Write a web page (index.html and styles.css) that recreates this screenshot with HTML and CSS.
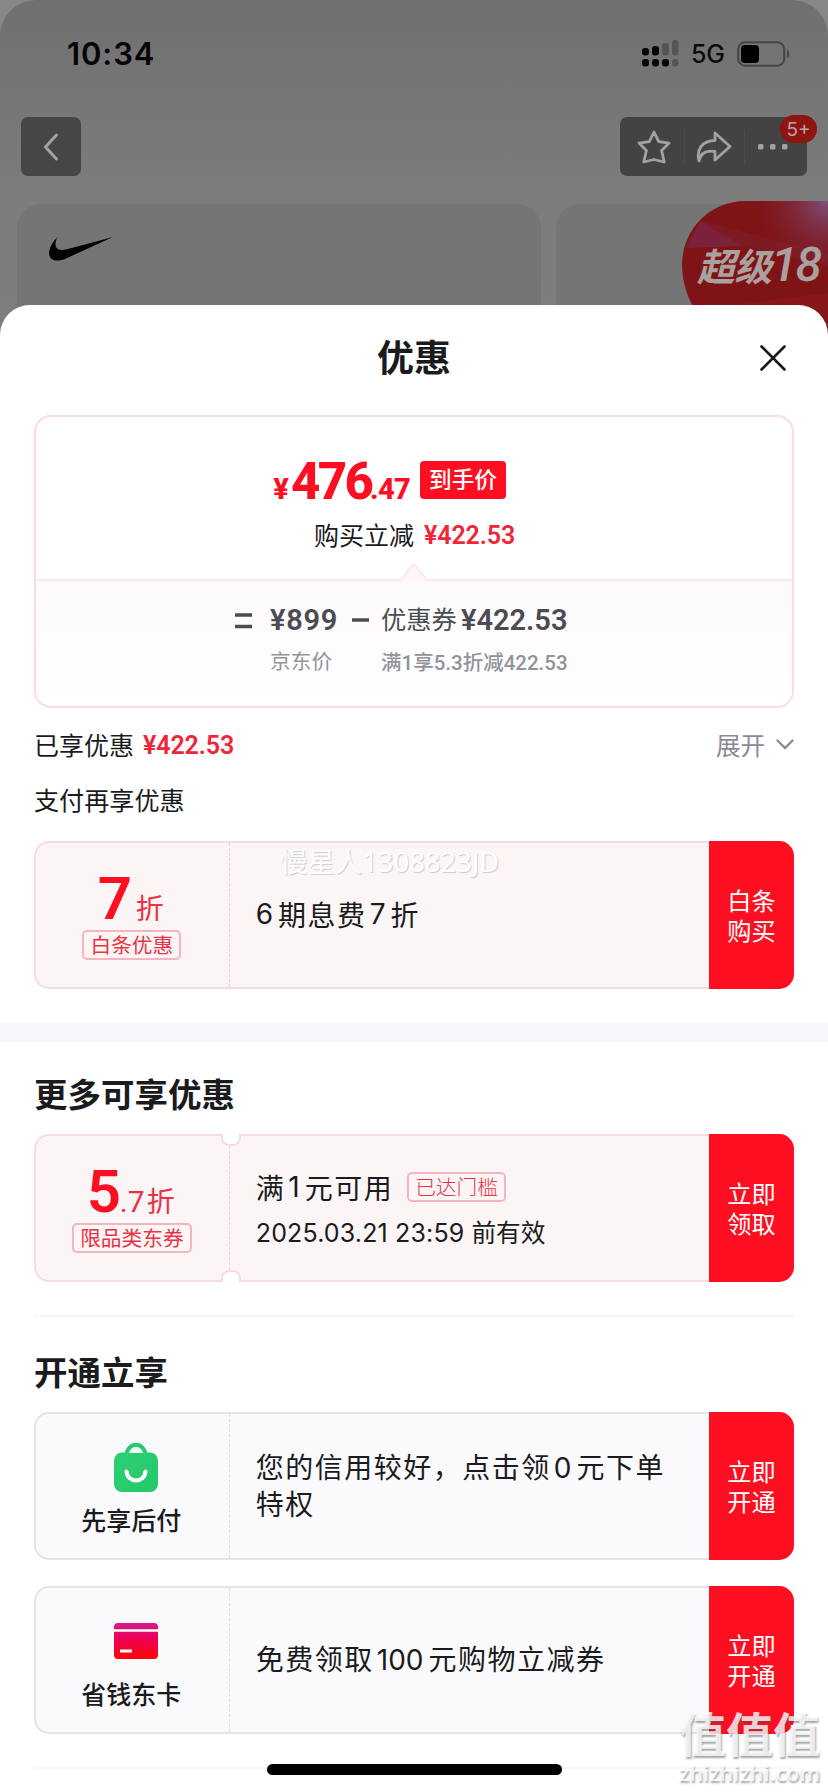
FILE: index.html
```html
<!DOCTYPE html>
<html lang="zh-CN">
<head>
<meta charset="utf-8">
<title>优惠</title>
<link rel="stylesheet" href="styles.css">
</head>
<body>
<div class="screen">
  <div class="backdrop">
    <div class="status">
      <span class="time">10:34</span>
      <div class="status-right">
        <svg class="signal" width="37" height="27" viewBox="0 0 37 27">
          <g fill="#060606"><rect x="0" y="8" width="7" height="7.500" rx="3"/><rect x="10" y="6" width="7" height="9.500" rx="3"/><rect x="0" y="19" width="7" height="7.500" rx="3"/><rect x="10" y="19" width="7" height="7.500" rx="3"/><rect x="20" y="19" width="7" height="7.500" rx="3"/></g>
          <g fill="#555"><rect x="20" y="3" width="7" height="12.500" rx="3"/><rect x="30" y="0" width="6.500" height="15.500" rx="3"/><rect x="30" y="19" width="6.500" height="7.500" rx="3"/></g>
        </svg>
        <span class="net">5G</span>
        <svg width="53" height="26" viewBox="0 0 53 26"><rect x="1.200" y="1.200" width="46" height="23.500" rx="7" fill="none" stroke="#454545" stroke-width="2"/><rect x="4" y="4" width="18" height="18" rx="4" fill="#000"/><path d="M50 9c3 1 3 7 0 8z" fill="#454545"/></svg>
      </div>
    </div>
    <div class="nav">
      <div class="back"><svg width="16" height="28" viewBox="0 0 16 28"><path d="M13.500 2L2.500 14l11 12" fill="none" stroke="#a2a2a2" stroke-width="3" stroke-linecap="round" stroke-linejoin="round"/></svg></div>
      <div class="actions">
        <svg width="34" height="34" viewBox="0 0 34 34"><path d="M17 2l4.700 9.600 10.400 1.500-7.500 7.400 2.600 11.500L17 29.500 6.800 32l2.600-11.500L2 13.100l10.300-1.500z" fill="none" stroke="#a2a2a2" stroke-width="2.800" stroke-linejoin="round"/></svg>
        <i></i>
        <svg width="36" height="34" viewBox="0 0 36 34"><path d="M19 3l15 13.500L19 30v-8.500C10 20 4.500 23.500 3 31 0 20 6 10.500 19 10.500z" fill="none" stroke="#a2a2a2" stroke-width="2.800" stroke-linejoin="round"/></svg>
        <i></i>
        <svg width="30" height="6" viewBox="0 0 30 6" fill="#a2a2a2"><rect width="5.500" height="5.500" rx="1.500"/><rect x="12" width="5.500" height="5.500" rx="1.500"/><rect x="24" width="5.500" height="5.500" rx="1.500"/></svg>
        <b class="badge">5+</b>
      </div>
    </div>
    <div class="tiles">
      <div class="tile"><svg width="64" height="24" viewBox="0 0 64 24"><path d="M64 0L17 21.500C7 26-1 23 .2 14.500 1 9 4 4.500 8.500 0 5 7 5 15 17 12.500z" fill="#020202"/></svg></div>
      <div class="tile second"></div>
      <div class="promo"><svg width="146" height="150" viewBox="0 0 146 150"><defs><radialGradient id="glow" cx="1" cy="0" r=".5"><stop offset="0" stop-color="#7d527c"/><stop offset="1" stop-color="#7f1f30" stop-opacity="0"/></radialGradient></defs><rect width="146" height="150" fill="#7f1417"/><path d="M18 20L60 45 5 47z" fill="#7d2142"/><path d="M0 47L60 45 146 65v-12L20 20z" fill="#7d2030" opacity=".5"/><path d="M20 108L146 92v58H0z" fill="#891719"/><rect width="146" height="150" fill="url(#glow)"/></svg><span>超级<b>18</b></span></div>
    </div>
  </div>

  <main class="sheet">
    <header class="head"><h1>优惠</h1>
      <svg class="close" width="26" height="26" viewBox="0 0 26 26"><path d="M1.500 1.500l23 23m0-23l-23 23" stroke="#17181a" stroke-width="2.600" stroke-linecap="round"/></svg>
    </header>
    <section class="price-card">
      <div class="price-top">
        <div class="price"><span class="yen">¥</span><span class="int">476</span><span class="dec">.47</span><span class="hand">到手价</span></div>
        <div class="cut"><span>购买立减</span><em>¥422.53</em></div>
      </div>
      <div class="formula">
        <svg class="tip" width="30" height="18" viewBox="0 0 30 18"><path d="M0 18h1L13 3q2-2 4 0l12 15h1" fill="#fdf7f9"/><path d="M0 17h2L13 3q2-2 4 0l11 14h2" fill="none" stroke="#fce8ec" stroke-width="2"/></svg>
        <svg class="eq" width="17" height="16" viewBox="0 0 17 16"><path d="M0 2h17M0 13.500h17" stroke="#4a4c52" stroke-width="3.500"/></svg>
        <div class="term base"><p>¥899</p><small>京东价</small></div>
        <svg class="minus" width="17" height="4" viewBox="0 0 17 4"><path d="M0 2h17" stroke="#4a4c52" stroke-width="3.500"/></svg>
        <div class="term off"><p><span>优惠券</span>¥422.53</p><small>满1享5.3折减422.53</small></div>
      </div>
    </section>
    <div class="enjoyed"><span>已享优惠</span><em>¥422.53</em><span class="expand">展开</span>
      <svg width="18" height="11" viewBox="0 0 18 11"><path d="M1.500 1.500L9 9l7.500-7.500" fill="none" stroke="#888b94" stroke-width="2.300" stroke-linecap="round"/></svg>
    </div>
    <p class="pay">支付再享优惠</p>
    <section class="coupon">
      <div class="left"><div class="disc seven"><b>7</b><span>折</span></div><span class="tag">白条优惠</span></div>
      <div class="info"><p class="main"><span class="n first">6</span>期息费<span class="n">7</span>折</p></div>
      <button class="go"><span>白条</span><span>购买</span></button>
      <span class="user-mark">慢星人1308823JD</span>
    </section>
    <div class="band"></div>
    <h2 class="more">更多可享优惠</h2>
    <section class="coupon notched">
      <div class="left"><div class="disc"><b>5</b><i>.7</i><span>折</span></div><span class="tag">限品类东券</span></div>
      <div class="info two"><p class="main">满<span class="n">1</span>元可用<span class="tag light">已达门槛</span></p><p class="date"><span>2025.03.21 23:59</span>前有效</p></div>
      <button class="go"><span>立即</span><span>领取</span></button>
    </section>
    <div class="rule"></div>
    <h2 class="open">开通立享</h2>
    <section class="coupon gray">
      <div class="left service">
        <svg width="44" height="50" viewBox="0 0 44 50"><defs><linearGradient id="bag" x1="0" x2="1" y2="1"><stop stop-color="#31ce74"/><stop offset="1" stop-color="#20ca68"/></linearGradient></defs><path d="M12 14C13-2.500 31-2.500 32 14" fill="#e9fbf0" stroke="#2bc86f" stroke-width="4"/><rect y="9.500" width="44" height="39.500" rx="8" fill="url(#bag)"/><path d="M15 10c2-5 12-5 14 0z" fill="#e9fbf0"/><path d="M12.500 28.500c1 12 18 12 19 0" fill="none" stroke="#fff" stroke-width="4" stroke-linecap="round"/></svg>
        <span>先享后付</span>
      </div>
      <div class="info"><p class="main">您的信用较好，点击领<span class="n">0</span>元下单<br>特权</p></div>
      <button class="go"><span>立即</span><span>开通</span></button>
    </section>
    <section class="coupon gray last">
      <div class="left service card">
        <svg width="44" height="36" viewBox="0 0 44 36"><defs><linearGradient id="card" x2="0" y2="1"><stop stop-color="#cf1f8d"/><stop offset=".45" stop-color="#ee0053"/><stop offset="1" stop-color="#fd0505"/></linearGradient></defs><rect width="44" height="36" rx="4" fill="url(#card)"/><path d="M0 7.500h44" stroke="#fff" stroke-width="2.400"/><path d="M6 28h12" stroke="#fff" stroke-width="3"/></svg>
        <span>省钱东卡</span>
      </div>
      <div class="info"><p class="main">免费领取<span class="n">100</span>元购物立减券</p></div>
      <button class="go"><span>立即</span><span>开通</span></button>
    </section>
    <div class="rule bottom"></div>
  </main>
  <div class="home"></div>
  <div class="site-mark"><strong>值值值</strong><span>zhizhizhi.com</span></div>
</div>
</body>
</html>
```
FILE: styles.css
```css
* { box-sizing: border-box; margin: 0; padding: 0; }
body { width: 828px; height: 1792px; overflow: hidden; background: #888; color: #1a1b1d; font-family: "Noto Sans CJK SC", sans-serif; }
svg { display: block; flex: none; }
em, i { font-style: normal; }
.screen { position: relative; width: 828px; height: 1792px; overflow: hidden; }
.backdrop { height: 360px; background: linear-gradient(#707070, #7c7c7c 190px, #7e7e7e); border-radius: 36px 36px 0 0; overflow: hidden; margin-bottom: -55px; }

.status { height: 117px; padding: 40px 38px 0 67px; display: flex; justify-content: space-between; }
.time { font: 600 31px/27px Inter, sans-serif; letter-spacing: .9px; color: #050505; }
.status-right { display: flex; height: 27px; align-items: center; }
.net { font: 500 25px/27px Inter, sans-serif; margin: 2px 11px 0 12px; width: 35px; color: #0b0b0b; letter-spacing: -.3px; }
.nav { display: flex; justify-content: space-between; padding: 0 21px; height: 59px; }
.back { width: 60px; border-radius: 7px; background: #464646; display: flex; align-items: center; justify-content: center; }
.actions { position: relative; width: 187px; border-radius: 7px; background: #434343; display: flex; align-items: center; padding-left: 17px; }
.actions i { width: 1px; height: 34px; background: #4c4c4c; margin: 0 11px 0 13px; }
.actions i + svg + i { margin: 0 13px 0 12px; }
.badge { position: absolute; right: -10px; top: -2px; width: 37px; height: 28px; border-radius: 14px; background: #8f1414; color: #b9a5a5; font: 400 19px/29px Inter, sans-serif; text-align: center; }
.tiles { display: flex; gap: 15px; padding: 28px 0 0 17px; height: 184px; position: relative; }
.tile { width: 524px; border-radius: 24px 24px 0 0; background: #757575; padding: 33px 32px; flex: none; }
.tile.second { width: 300px; }
.promo { position: absolute; left: 682px; top: 25px; width: 146px; height: 150px; border-radius: 66px 0 0 90px; overflow: hidden; }
.promo span { position: absolute; left: 15px; top: 38px; font: italic 700 38px/52px "Noto Sans CJK SC", sans-serif; letter-spacing: -1px; color: #aaa09f; white-space: nowrap; }
.promo b { font: italic 500 48px/52px Roboto, sans-serif; letter-spacing: -2px; }

.sheet { position: relative; height: 1487px; background: #fff; border-radius: 30px 30px 0 0; padding: 0 34px; }
.head { height: 110px; display: flex; justify-content: center; position: relative; }
h1 { font-size: 37px; font-weight: 700; line-height: 54px; padding-top: 24px; }
.close { position: absolute; right: 8px; top: 40px; }
.price-card { height: 293px; border: 2px solid #f9dbe1; border-radius: 17px; overflow: hidden; }
.price-top { height: 162px; text-align: center; padding-top: 44px; }
.price { display: flex; justify-content: flex-start; padding-left: 235px; height: 38px; color: #fd0f21; font-family: Roboto, sans-serif; font-weight: 800; white-space: nowrap; }
.price span { line-height: 38px; }
.yen { font-size: 29px; width: 20px; margin-top: 9px; }
.int { font-size: 51px; width: 79px; letter-spacing: -2.600px; margin-top: 2px; text-align: left; }
.dec { font-size: 29px; width: 50px; letter-spacing: -.7px; margin-top: 9px; text-align: left; }
.price .hand { background: #fd0f21; color: #fff; width: 86px; border-radius: 4px; font: 500 22.700px/36px "Noto Sans CJK SC", sans-serif; text-align: center; }
.cut { display: flex; height: 36px; line-height: 36px; margin-top: 17px; padding-left: 278px; font-size: 25px; gap: 10px; }
.cut em, .enjoyed em { font-family: Roboto, sans-serif; font-weight: 600; color: #ee2638; letter-spacing: -.1px; }
.cut em { padding-top: 2px; }
.formula { position: relative; height: 127px; border-top: 2px solid #fce8ec; background: linear-gradient(#fdf9fb, #fff 100%); display: flex; padding: 19px 0 0 199px; color: #4a4c52; }
.tip { position: absolute; left: 363px; top: -18px; }
.eq { margin-top: 13px; }
.minus { margin-top: 18px; }
.term { white-space: nowrap; }
.term p { font: 600 29px/40px Roboto, "Noto Sans CJK SC", sans-serif; height: 42px; }
.base p { letter-spacing: .7px; }
.term small { display: block; line-height: 36px; color: #92949c; margin-top: 0; }
.base { width: 82px; margin-left: 18px; }
.base small { font-size: 20.700px; }
.off { margin-left: 12px; }
.off p { margin-top: -1px; }
.off p span { font: 400 25.300px/40px "Noto Sans CJK SC", sans-serif; margin-right: 4px; position: relative; top: -1px; }
.term.off small { font: 500 20.500px/38px Roboto, "Noto Sans CJK SC", sans-serif; margin-top: 3px; }
.enjoyed { display: flex; align-items: center; height: 38px; margin-top: 17px; font-size: 25px; }
.enjoyed em { margin-left: 9px; font-size: 25px; flex: 1; padding-top: 2px; }
.expand { color: #888b94; margin-right: 11px; font-size: 24.500px; }
.pay { font-size: 25.100px; line-height: 36px; margin-top: 18px; }
.coupon { position: relative; display: flex; height: 148px; border: 2px solid #f5dce0; border-right: 0; border-radius: 15px; background: #fcf5f6; margin-top: 24px; }
.left { width: 194px; border-right: 1px dashed #efcfd5; display: flex; flex-direction: column; align-items: center; padding-top: 27px; }
.disc { height: 51px; line-height: 60px; display: flex; align-items: baseline; color: #e93244; font-size: 28px; margin: -1px 0 1px; }
.disc b { font: 600 60px/60px Roboto, sans-serif; color: #fd0f21; width: 33px; margin-left: -3px; }
.disc i { font: 400 30px/60px Roboto, sans-serif; width: 27px; }
.seven b { width: 38px; }
.tag { border: 2px solid #f4b5be; border-radius: 5px; height: 30px; line-height: 25px; padding: 0 6px; font-size: 20.700px; color: #e93244; margin-top: 9px; }
.left .tag { margin-left: -1px; }
.info { width: 480px; padding-left: 26px; display: flex; flex-direction: column; justify-content: center; white-space: nowrap; padding-bottom: 1px; }
.main { font-size: 28px; line-height: 35px; letter-spacing: 1.500px; display: flex; align-items: center; }
.n { font-family: Inter, sans-serif; font-size: 28px; letter-spacing: 0; margin: 0 5px 0 3px; }
.first { margin-left: 0; }
.gray .main { display: block; }
.gray .info { padding-bottom: 2px; }
.light { letter-spacing: 0; font-weight: 300; margin: 0 0 0 14px; }
.info.two { padding: 4px 0 0 26px; }
.date { font-size: 24.700px; line-height: 36px; margin-top: 8px; }
.date span { font-family: Inter, sans-serif; font-size: 25px; margin-right: 7px; letter-spacing: .15px; }
.go { width: 85px; height: 148px; margin: -2px 0; border: 0; border-radius: 0 15px 15px 0; background: #fd0f21; color: #fff; font: 400 24.200px/30px "Noto Sans CJK SC", sans-serif; display: flex; flex-direction: column; align-items: center; justify-content: center; }
.user-mark { position: absolute; left: 244px; top: 2px; font: 400 27.400px/34px "Noto Sans", "Noto Sans CJK SC", sans-serif; color: #fff; text-shadow: 1px 1px 1px #cfc9ca; white-space: nowrap; }
.band { height: 19px; background: #f6f7fb; margin: 34px -34px 0; }
h2 { font-size: 33.500px; line-height: 48px; font-weight: 700; }
.more { margin-top: 27px; }
.notched { margin-top: 17px; }
.notched::before, .notched::after { content: ""; position: absolute; left: 185px; width: 16px; height: 10px; background: #fff; border: 2px solid #f5dce0; }
.notched::before { top: -2px; border-top: 0; border-radius: 0 0 8px 8px; }
.notched::after { bottom: -2px; border-bottom: 0; border-radius: 8px 8px 0 0; }
.rule { height: 2px; background: #f7f7f9; margin-top: 33px; }
.open { margin-top: 30px; }
.gray { background: #fafafc; border-color: #e4e5e8; margin-top: 17px; }
.gray .left { border-right-color: #dedfe3; }
.service { padding: 29px 0 0 7px; }
.service span { font-size: 25px; line-height: 36px; font-weight: 500; margin: 8px 9px 0 0; }
.left.card { padding-top: 35px; }
.card span { margin-top: 16px; }
.last { margin-top: 26px; }
.bottom { margin-top: 33px; }
.home { position: absolute; left: 267px; top: 1764px; width: 295px; height: 11px; border-radius: 6px; background: #000; }
.site-mark { position: absolute; left: 679px; top: 1705px; width: 144px; white-space: nowrap; color: rgba(255,255,255,.78); text-shadow: 1px 2px 2px rgba(80,80,80,.5); }
.site-mark strong { display: block; font-size: 47px; line-height: 54px; font-weight: 700; }
.site-mark span { display: block; font: 600 21.500px/24px "Noto Sans", sans-serif; margin-top: 2px; }
```
